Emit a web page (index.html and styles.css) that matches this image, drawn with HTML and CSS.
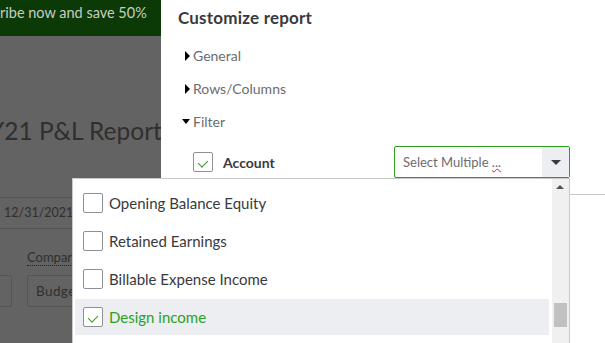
FILE: index.html
```html
<!DOCTYPE html>
<html lang="en">
<head>
    <meta charset="UTF-8">
    <meta name="viewport" content="width=device-width, initial-scale=1.0">
    <title>Customize report</title>
    <link rel="stylesheet" href="styles.css">
</head>
<body>
    <div class="screen">
        <div class="page">
            <div class="promo">ribe now and save 50%</div>
            <h1 class="reportTitle">Y21 P&amp;L Report</h1>
            <div class="dateField">12/31/2021</div>
            <div class="compareLabel"><span>Compare</span></div>
            <div class="compareRow">
                <div class="pageBox first"></div>
                <div class="pageBox">Budget</div>
            </div>
        </div>

        <aside class="panel">
            <h2 class="panelTitle">Customize report</h2>
            <div class="section"><span class="caret closed"></span>General</div>
            <div class="section"><span class="caret closed"></span>Rows/Columns</div>
            <div class="section"><span class="caret open"></span>Filter</div>

            <div class="filterRow">
                <span class="checkbox checked"></span>
                <span class="filterName">Account</span>
                <div class="multiSelect">
                    <span class="placeholder">Select Multiple <span class="squiggle">...</span></span>
                    <span class="selectArrow"><span class="arrowDown"></span></span>

                    <div class="dropdown">
                        <div class="dropdownList">
                            <div class="option"><span class="checkbox"></span>Opening Balance Equity</div>
                            <div class="option"><span class="checkbox"></span>Retained Earnings</div>
                            <div class="option"><span class="checkbox"></span>Billable Expense Income</div>
                            <div class="option selected"><span class="checkbox checked"></span>Design income</div>
                        </div>
                        <div class="scrollbar">
                            <span class="arrowUp"></span>
                            <span class="thumb"></span>
                        </div>
                    </div>
                </div>
            </div>
            <div class="divider"></div>
        </aside>
    </div>
</body>
</html>
```

FILE: styles.css
```css
* {
    margin: 0;
    padding: 0;
    box-sizing: border-box;
}
body {
    font-family: Lato, 'Open Sans', Arial, sans-serif;
    color: #393a3d;
    background-color: #fff;
    width: 605px;
    height: 343px;
    overflow: hidden;
}
.screen {
    display: flex;
    height: 343px;
}

/* page behind the overlay */
.page {
    width: 161px;
    flex-shrink: 0;
    background-color: #636363;
    overflow: hidden;
    color: #2f2f2f;
}
.promo {
    height: 36px;
    background-color: #0b3a06;
    color: #c7cfc5;
    font-size: 14.5px;
    line-height: 25px;
    white-space: nowrap;
}
.reportTitle {
    margin-top: 79px;
    margin-left: -11px;
    font-size: 24.5px;
    font-weight: 400;
    line-height: 32px;
    white-space: nowrap;
}
.dateField {
    margin-top: 50px;
    margin-left: -10px;
    width: 200px;
    height: 32px;
    border: 1px solid #555;
    padding-left: 13px;
    font-size: 12.5px;
    line-height: 30px;
}
.compareLabel {
    margin-top: 18px;
    padding-left: 27px;
    font-size: 13px;
    line-height: 20px;
    white-space: nowrap;
}
.compareLabel span {
    border-bottom: 1px dotted #222;
}
.compareRow {
    display: flex;
    gap: 15px;
    margin-top: 8px;
    margin-left: -20px;
}
.pageBox {
    height: 32px;
    width: 100px;
    border: 1px solid #555;
    border-radius: 2px;
    padding-left: 8px;
    font-size: 13.5px;
    line-height: 30px;
    letter-spacing: 0.4px;
}
.pageBox.first {
    width: 32px;
}

/* customize panel */
.panel {
    flex: 1;
    position: relative;
    background-color: #fff;
    padding-left: 17px;
    padding-top: 5px;
}
.panelTitle {
    font-size: 17px;
    font-weight: 700;
    line-height: 25px;
    letter-spacing: 0.2px;
    color: #393a3d;
}
.section {
    display: flex;
    align-items: center;
    height: 33px;
    font-size: 14px;
    color: #6b6c72;
}
.section:first-of-type {
    margin-top: 9px;
}
.caret {
    width: 15px;
    display: inline-flex;
    justify-content: center;
}
.caret.closed::before {
    content: '';
    border-left: 5px solid #000;
    border-top: 5px solid transparent;
    border-bottom: 5px solid transparent;
    margin-left: 3px;
}
.caret.open::before {
    content: '';
    border-top: 5px solid #000;
    border-left: 4px solid transparent;
    border-right: 4px solid transparent;
}

.filterRow {
    display: flex;
    align-items: center;
    margin-top: 8px;
    padding-left: 15px;
}
.checkbox {
    width: 20px;
    height: 20px;
    border: 1px solid #8d9096;
    border-radius: 2px;
    background-color: #fff;
    flex-shrink: 0;
    position: relative;
}
.checkbox.checked::after {
    content: '';
    position: absolute;
    left: 6px;
    top: 5px;
    width: 5px;
    height: 8px;
    border-right: 1.5px solid #2ca01c;
    border-bottom: 1.5px solid #2ca01c;
    transform: rotate(45deg);
}
.filterName {
    margin-left: 10px;
    font-size: 14px;
    font-weight: 700;
    color: #393a3d;
    width: 171px;
}
.multiSelect {
    position: relative;
    display: flex;
    width: 176px;
    height: 32px;
    border: 1px solid #2ca01c;
    border-radius: 2px;
}
.placeholder {
    flex: 1;
    padding-left: 8px;
    font-size: 13px;
    line-height: 30px;
    color: #6b6c72;
    white-space: nowrap;
}
.squiggle {
    text-decoration: underline wavy #e0201b;
    text-decoration-thickness: 1px;
}
.selectArrow {
    width: 27px;
    background-color: #eceef1;
    display: flex;
    align-items: center;
    justify-content: center;
}
.arrowDown {
    border-top: 5px solid #393a3d;
    border-left: 5px solid transparent;
    border-right: 5px solid transparent;
}

.divider {
    position: absolute;
    left: 0;
    right: 0;
    top: 194px;
    border-top: 1px solid #c9c9c9;
}

/* dropdown list overlaying the page */
.dropdown {
    position: absolute;
    top: 31px;
    right: -1px;
    width: 498px;
    height: 200px;
    display: flex;
    background-color: #fff;
    border: 1px solid #c9c9c9;
    border-bottom: none;
    z-index: 2;
}
.dropdownList {
    flex: 1;
    padding: 4px 2px 0 2px;
}
.option {
    display: flex;
    align-items: center;
    height: 36px;
    margin-top: 2px;
    padding-left: 8px;
    font-size: 15px;
    color: #393a3d;
    gap: 6px;
}
.option.selected {
    background-color: #eceef1;
    color: #2ca01c;
}
.scrollbar {
    width: 17px;
    margin-left: 1px;
    background-color: #f0f0f0;
    position: relative;
}
.arrowUp {
    position: absolute;
    top: 6px;
    left: 4px;
    border-bottom: 4px solid #505050;
    border-left: 4px solid transparent;
    border-right: 4px solid transparent;
}
.thumb {
    position: absolute;
    top: 124px;
    left: 2px;
    width: 13px;
    height: 24px;
    background-color: #c1c1c1;
}
```
